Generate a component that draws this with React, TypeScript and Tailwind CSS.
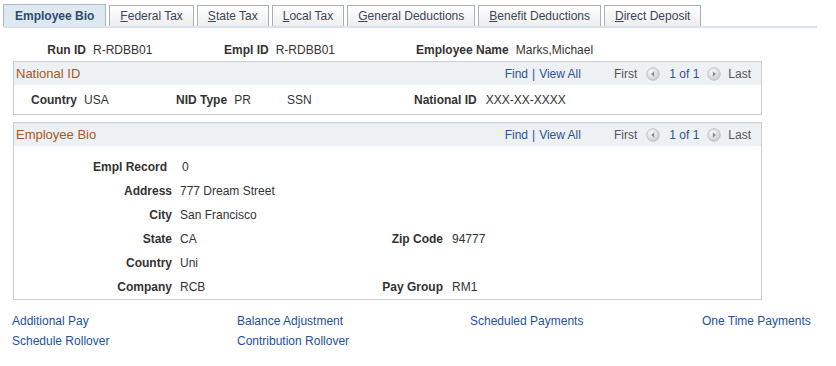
const tabs = [
  { key: "F", rest: "ederal Tax" },
  { key: "S", rest: "tate Tax" },
  { key: "L", rest: "ocal Tax" },
  { key: "G", rest: "eneral Deductions" },
  { key: "B", rest: "enefit Deductions" },
  { key: "D", rest: "irect Deposit" },
];

function NavIcon({ dir }: { dir: "left" | "right" }) {
  return (
    <svg width="14" height="14" viewBox="0 0 14 14">
      <defs>
        <radialGradient id={`g-${dir}`} cx="40%" cy="35%" r="70%">
          <stop offset="0%" stopColor="#fbfbfb" />
          <stop offset="100%" stopColor="#c6c9cc" />
        </radialGradient>
      </defs>
      <circle cx="7" cy="7" r="6.3" fill={`url(#g-${dir})`} stroke="#b9bcc0" strokeWidth="0.8" />
      {dir === "left" ? (
        <polygon points="8.2,4.3 8.2,9.7 5,7" fill="#8a8d91" />
      ) : (
        <polygon points="5.8,4.3 5.8,9.7 9,7" fill="#8a8d91" />
      )}
    </svg>
  );
}

function BoxHeader({ title }: { title: string }) {
  return (
    <div className="flex h-[23px] items-center bg-[#edf1f3] pl-[2px] pr-[10px]">
      <span className="text-[13px] text-[#a35a26]">{title}</span>
      <div className="ml-auto flex items-center">
        <span className="text-[#2f5296]">Find</span>
        <span className="mx-[4px] text-[#2f5296]">|</span>
        <span className="text-[#2f5296]">View All</span>
        <span className="ml-[33px] text-[#555]">First</span>
        <span className="ml-[9px] flex">
          <NavIcon dir="left" />
        </span>
        <span className="ml-[9px] text-[#2f5296]">1 of 1</span>
        <span className="ml-[8px] flex">
          <NavIcon dir="right" />
        </span>
        <span className="ml-[7px] text-[#555]">Last</span>
      </div>
    </div>
  );
}

function BioRow({
  label,
  value,
  label2,
  value2,
  short,
}: {
  label: string;
  value: string;
  label2?: string;
  value2?: string;
  short?: boolean;
}) {
  return (
    <div className="flex h-[24px] items-center whitespace-nowrap">
      <span className={`w-[158px] shrink-0 text-right font-bold ${short ? "pr-[5px]" : ""}`}>{label}</span>
      <span className={`w-[180px] shrink-0 ${short ? "pl-[10px]" : "pl-[8px]"}`}>{value}</span>
      {label2 && <span className="w-[91px] shrink-0 text-right font-bold">{label2}</span>}
      {value2 && <span className="pl-[9px]">{value2}</span>}
    </div>
  );
}

export default function App() {
  return (
    <div className="h-[366px] w-[836px] overflow-hidden bg-white font-['Liberation_Sans',Arial,sans-serif] text-[12px] text-[#333]">
      {/* tabs */}
      <div className="pl-[3px] pt-[4px]">
        <div className="flex w-[814px] items-end gap-[3px] border-b-[2px] border-[#d6e2ef]">
          <div className="flex h-[22px] items-center border border-b-0 border-[#a9b8c8] bg-[#dfe7f0] px-[11px] font-bold text-[#2d4c70]">
            Employee Bio
          </div>
          {tabs.map((t) => (
            <div
              key={t.key}
              className="flex h-[21px] items-center whitespace-nowrap border border-b-0 border-[#a6b1bf] bg-gradient-to-b from-white to-[#eeeeee] px-[10px] text-[#3a4555]"
            >
              <span className="underline">{t.key}</span>
              {t.rest}
            </div>
          ))}
        </div>
      </div>

      {/* key fields */}
      <div className="mt-[12px] flex h-[20px] items-center whitespace-nowrap">
        <span className="w-[86px] shrink-0 text-right font-bold">Run ID</span>
        <span className="w-[138px] shrink-0 pl-[7px]">R-RDBB01</span>
        <span className="w-[192px] shrink-0">
          <span className="font-bold">Empl ID</span>
          <span className="pl-[7px]">R-RDBB01</span>
        </span>
        <span className="font-bold">Employee Name</span>
        <span className="pl-[7px]">Marks,Michael</span>
      </div>

      {/* National ID */}
      <div className="ml-[13px] mt-[1px] w-[749px] border border-[#c9ced4]">
        <BoxHeader title="National ID" />
        <div className="flex h-[29px] items-center whitespace-nowrap pl-[17px]">
          <span className="w-[145px] shrink-0">
            <span className="font-bold">Country</span>
            <span className="pl-[7px]">USA</span>
          </span>
          <span className="w-[111px] shrink-0">
            <span className="font-bold">NID Type</span>
            <span className="pl-[7px]">PR</span>
          </span>
          <span className="w-[127px] shrink-0">SSN</span>
          <span>
            <span className="font-bold">National ID</span>
            <span className="pl-[9px]">XXX-XX-XXXX</span>
          </span>
        </div>
      </div>

      {/* Employee Bio */}
      <div className="ml-[13px] mt-[7px] w-[749px] border border-[#c9ced4]">
        <BoxHeader title="Employee Bio" />
        <div className="pt-[9px]">
          <BioRow label="Empl Record" value="0" short />
          <BioRow label="Address" value="777 Dream Street" />
          <BioRow label="City" value="San Francisco" />
          <BioRow label="State" value="CA" label2="Zip Code" value2="94777" />
          <BioRow label="Country" value="Uni" />
          <BioRow label="Company" value="RCB" label2="Pay Group" value2="RM1" />
        </div>
      </div>

      {/* links */}
      <div className="mt-[12px] grid grid-cols-[225px_233px_232px_1fr] pl-[12px] text-[#1e50a2]">
        <span className="h-[20px]">Additional Pay</span>
        <span className="h-[20px]">Balance Adjustment</span>
        <span className="h-[20px]">Scheduled Payments</span>
        <span className="h-[20px]">One Time Payments</span>
        <span className="h-[20px]">Schedule Rollover</span>
        <span className="h-[20px]">Contribution Rollover</span>
      </div>
    </div>
  );
}
